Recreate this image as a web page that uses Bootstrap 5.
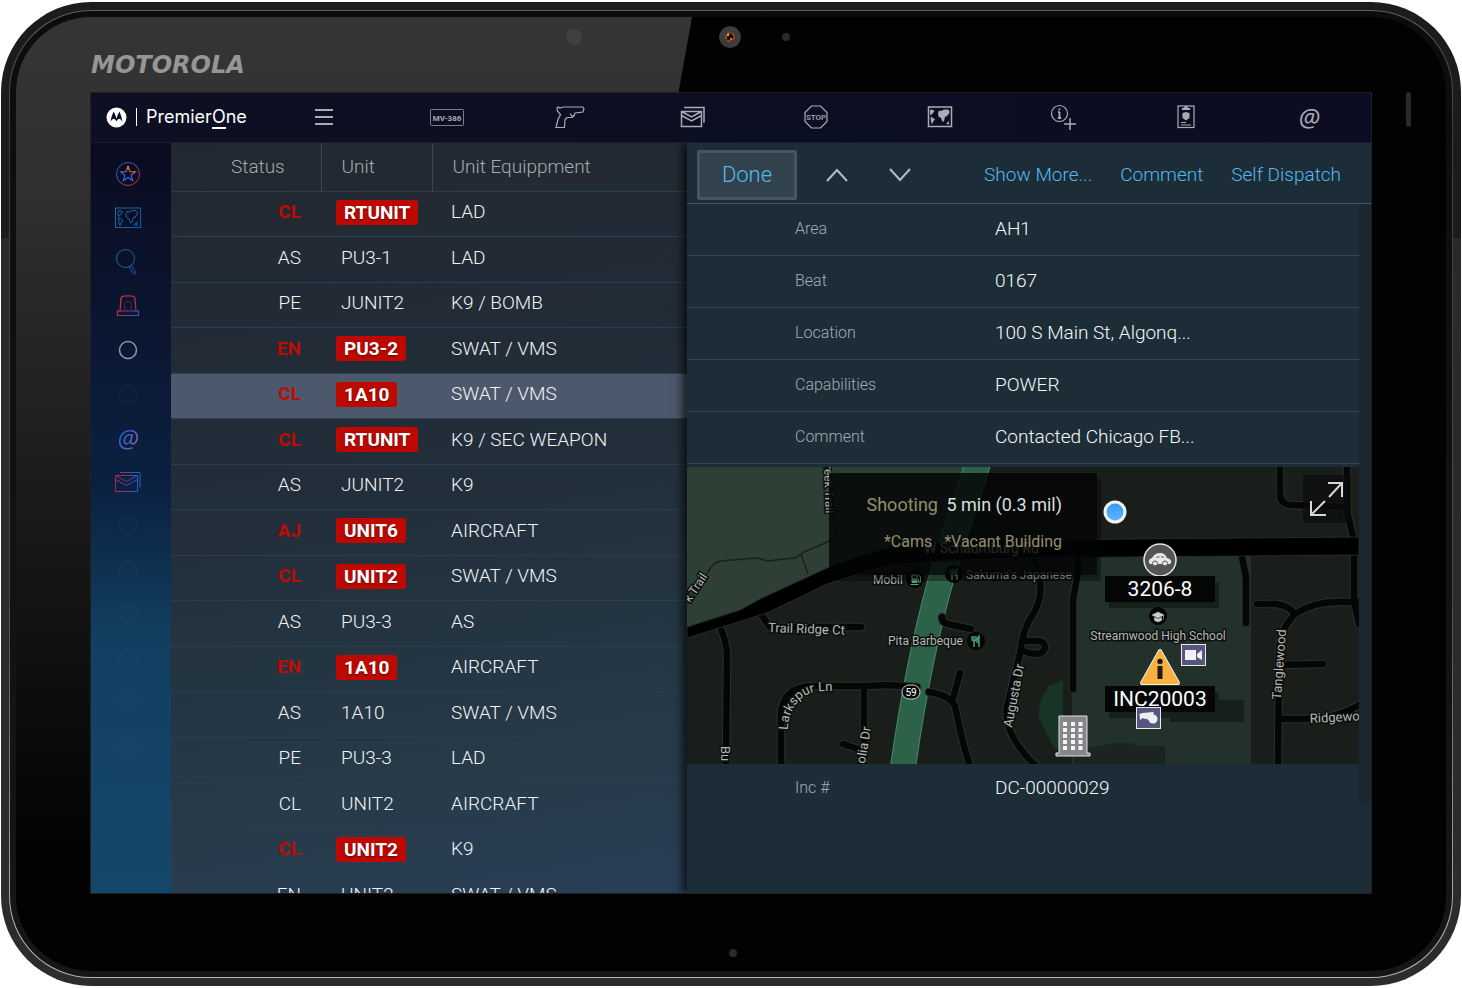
<!DOCTYPE html>
<html lang="en">
<head>
<meta charset="utf-8">
<meta name="viewport" content="width=device-width, initial-scale=1">
<title>PremierOne</title>
<link href="https://cdn.jsdelivr.net/npm/bootstrap@5.3.0/dist/css/bootstrap.min.css" rel="stylesheet">
<style>
  body { font-family: Roboto, "Liberation Sans", sans-serif; background: #fff; color: #eceff1; font-size: 19px; line-height: 24px; }
  button { font-family: inherit; }
  /* tablet body */
  .device { height: 100vh; padding: 2px 1px; }
  .shell { padding: 8px; border-radius: 90px; background: linear-gradient(#1b1c1d, #1c1c1e 24%, #2a2a2a 24%, #2c2c2c); }
  .rim { padding: 1px; border-radius: 82px; background: linear-gradient(#5c5e60, #3c3e40 12%, #48494a 60%, #b4b5b6 96%); }
  .gasket { padding: 6px; border-radius: 81px; background: linear-gradient(#0b0c0c, #161616); }
  .glass { position: relative; border-radius: 75px; background: #020202; overflow: hidden; padding: 0 75px 78px; }
  .glare { position: absolute; top: 0; left: 0; width: 676px; height: 830px; background: linear-gradient(#353535, #303030 20%, #030303); clip-path: polygon(0 0, 100% 0, 78% 100%, 0 100%); }
  .lens { position: absolute; border-radius: 50%; }
  .lens-left { width: 16px; height: 16px; left: calc(50% - 165px); top: 12px; background: #404040; }
  .lens-main { width: 22px; height: 22px; left: calc(50% - 12px); top: 9px; }
  .lens-dot { width: 8px; height: 8px; left: calc(50% + 51px); top: 16px; background: #2a2a2a; }
  .lens-low { width: 8px; height: 8px; left: calc(50% - 2px); bottom: 14px; background: #2b2b2b; }
  .speaker { position: absolute; right: 35px; top: 75px; width: 5px; height: 35px; border-radius: 3px; background: #2a2a2a; }
  .maker { position: relative; height: 77px; padding-top: 36px; font: italic bold 24px/24px "DejaVu Sans", sans-serif; color: #969696; }
  .screen { position: relative; min-height: 0; outline: 1px solid #1d1f22; }
  /* top bar */
  .topbar { height: 50px; background: linear-gradient(90deg, #0d0f22, #0c0d22); border-bottom: 1px solid #1b1c28; }
  .brand { width: 171px; padding-left: 15px; }
  .brand-name { font: 18px/18px Inter, sans-serif; color: #fff; border-left: 1px solid #fff; padding-left: 9px; margin-left: 9px; }
  .brand-name span { border-bottom: 2px solid #fff; }
  .icon-btn { background: none; border: 0; padding: 0; color: #a9acb4; display: flex; align-items: center; justify-content: center; }
  .icon-btn svg, .side svg { fill: none; stroke: currentColor; }
  .at { font: italic 25px/26px "Open Sans", sans-serif; }
  /* left rail */
  .side { width: 80px; padding: 9px 6px 0 0; background: linear-gradient(#0a0c20, #0b152f 22%, #0b2142 46%, #123f60 66%, #15476a); }
  .side .icon-btn { height: 44px; width: 100%; }
  .side .dim { color: #5f86a4; opacity: .12; }
  .side .at { background: linear-gradient(120deg, #1565c8 25%, #7a5bb5 75%); -webkit-background-clip: text; background-clip: text; color: transparent; }
  /* unit list */
  .units { flex: 516 1 0; min-width: 0; overflow: hidden; background: linear-gradient(170deg, #222831, #222e3a 45%, #263a48 80%, #293f56); }
  .unit-table { --bs-table-bg: transparent; --bs-table-color: #f2f4f6; table-layout: fixed; margin: 0; border-color: #2a3f4e; font-weight: 300; }
  .unit-table th { height: 49px; padding: 0 0 0 20px; font-weight: 300; color: #a6abb0; vertical-align: middle; }
  .unit-table th + th { border-left: 1px solid #3a4650; }
  .unit-table .col-status { width: 150px; padding-left: 60px; }
  .unit-table .col-unit { width: 111px; }
  .unit-table td { height: 46px; padding: 0 0 4px 19px; vertical-align: middle; }
  .unit-table tbody tr:nth-child(odd) td { height: 45px; }
  .unit-table td:first-child { text-align: right; padding-right: 20px; }
  .unit-table td:nth-child(2) { padding-left: 15px; }
  .unit-table td:nth-child(2) span { display: inline-block; padding: 0 5px; }
  .unit-table .alert-row td:first-child { color: #bd0c04; font-weight: 700; }
  .unit-table .alert-row td:nth-child(2) span { background: #bd0900; color: #fff; font-weight: 700; padding: 0 8px; line-height: 25px; border-radius: 3px; text-shadow: 0 1px 2px #600; }
  .unit-table .chosen td { background: #4c596c; }
  /* detail panel */
  .detail { flex: 684 1 0; min-width: 0; background: #1c2d38; box-shadow: -5px 0 8px rgba(0,0,0,.65); position: relative; }
  .tools { height: 61px; padding: 7px 30px 3px 10px; border-bottom: 1px solid #46545d; font-weight: 300; }
  .tools a { color: #54b9ee; text-decoration: none; }
  .done { width: 100px; height: 50px; border: 3px solid #465660; border-radius: 2px; background: #31424d; color: #54b9ee; font-size: 22px; font-weight: 300; }
  .tools .icon-btn { width: 63px; color: #b6bdc1; }
  .fields { margin: 0; }
  .field { height: 52px; padding-left: 108px; border-bottom: 1px solid #34464f; }
  .field dt { width: 200px; font-size: 16px; font-weight: 300; color: #a3acb1; }
  .field dd { margin: 0; color: #f6f8f9; font-weight: 300; }
  .last-field { border: 0; height: 48px; }
  .track { width: 12px; height: 600px; border-radius: 6px; background: #182730; flex: none; }
  .map { position: relative; height: 297px; margin-top: 3px; overflow: hidden; background: #1a1e1b; }
  .map > svg { width: 100%; height: 100%; display: block; }
  .map text { font-family: Roboto, sans-serif; }
  .callout { position: absolute; left: 142px; top: 6px; width: 268px; height: 102px; padding: 20px 35px 0 0; text-align: right; font-size: 18px; background: rgba(3,5,5,.82); box-shadow: 4px 6px 0 rgba(0,0,0,.35); color: #dcdedf; }
  .callout p { margin: 0 0 13px; }
  .callout .tan { color: #958d6c; margin-right: 4px; }
  .callout .notes { font-size: 16px; color: #958d6c; }
  .expand { position: absolute; right: 8px; top: 8px; width: 48px; height: 48px; background: rgba(10,12,12,.7); color: #d6d8d8; }
</style>
</head>
<body>
<!-- shared gradients and symbols -->
<svg width="0" height="0" class="position-absolute" aria-hidden="true">
  <defs>
    <linearGradient id="gStar" x1="0" y1="0" x2="26" y2="26" gradientUnits="userSpaceOnUse"><stop offset=".1" stop-color="#135cb0"/><stop offset=".5" stop-color="#6a55a8"/><stop offset=".8" stop-color="#d0264a"/></linearGradient>
    <linearGradient id="gStar2" x1="14" y1="5" x2="10" y2="20" gradientUnits="userSpaceOnUse"><stop offset="0" stop-color="#e8a31c"/><stop offset=".35" stop-color="#c6554a"/><stop offset=".6" stop-color="#1a6cf0"/><stop offset="1" stop-color="#5a50e0"/></linearGradient>
    <linearGradient id="gBlue" x1="0" y1="0" x2="26" y2="20" gradientUnits="userSpaceOnUse"><stop offset="0" stop-color="#1d6f96"/><stop offset="1" stop-color="#0c58b4"/></linearGradient>
    <linearGradient id="gAlarm" x1="4" y1="0" x2="20" y2="24" gradientUnits="userSpaceOnUse"><stop offset="0" stop-color="#e8442e"/><stop offset=".55" stop-color="#b02f5e"/><stop offset="1" stop-color="#1d62c4"/></linearGradient>
    <linearGradient id="gMail" x1="0" y1="0" x2="26" y2="0" gradientUnits="userSpaceOnUse"><stop offset="0" stop-color="#b2264e"/><stop offset=".6" stop-color="#5a4c94"/><stop offset="1" stop-color="#0f66d0"/></linearGradient>
    <path id="lands" d="M3 4l2-.5 2.500 1.500-1 1.500L5 8l-1 1.500L3 8zM3.500 11l2 .5 2.500 2-1.500 1.500L5 18.500l-1-3zM11 7l1-2.500 2 .5 3-1.500 4 0 1.500 1.500-.5 3-1.500 1-.5 2-1-1-1 1-1 4-1.500 1-1.500-4-2.500-1.500zM19 18l3-3 0 3.500z"/>
  </defs>
</svg>

<div class="device">
 <div class="shell h-100"><div class="rim h-100"><div class="gasket h-100">
 <div class="glass h-100 d-flex flex-column">
  <div class="glare"></div>
  <span class="lens lens-left"></span>
  <svg class="lens lens-main" viewBox="0 0 22 22"><circle cx="11" cy="11" r="11" fill="#3e3c3b"/><circle cx="11" cy="11" r="4" fill="#1b0b06" stroke="#c04a22" stroke-width="1.5" stroke-dasharray="4 1"/><circle cx="9" cy="9" r="1" fill="#ffd9a8"/><circle cx="12" cy="13" r="1" fill="#f0a050"/></svg>
  <span class="lens lens-dot"></span>
  <span class="speaker"></span>
  <span class="lens lens-low"></span>
  <div class="maker">MOTOROLA</div>

  <div class="screen flex-fill d-flex flex-column">
   <header class="topbar d-flex flex-shrink-0">
    <div class="brand d-flex align-items-center flex-shrink-0">
     <svg width="21" height="21" viewBox="0 0 21 21"><circle cx="10.500" cy="10.500" r="10" fill="#fff"/><path d="M4.500 15.500C5 11 6.300 7 7.700 4.500c1.200 2.200 2.200 4.700 2.800 7.300.6-2.600 1.600-5.100 2.800-7.300 1.400 2.500 2.700 6.500 3.200 11-.6-2-1.800-3.300-3.100-3.700-1.200.1-2 .9-2.900 2.600-.9-1.700-1.700-2.500-2.900-2.600-1.300.4-2.500 1.700-3.100 3.700z" fill="#0d0f22"/></svg>
     <div class="brand-name">Premier<span>O</span>ne</div>
    </div>
    <nav class="d-flex flex-fill" aria-label="Main">
     <button class="icon-btn col" aria-label="Menu"><svg width="18" height="16" stroke-width="2"><path d="M0 1h18M0 8h18M0 15h18"/></svg></button>
     <button class="icon-btn col" aria-label="Plate search"><svg width="34" height="17"><rect x=".5" y=".5" width="33" height="16" rx="1" opacity=".7"/><text x="17" y="12" text-anchor="middle" font-family="Roboto" font-weight="700" font-size="8" fill="currentColor" stroke="none">MV-386</text></svg></button>
     <button class="icon-btn col" aria-label="Gun search"><svg width="30" height="23" viewBox="0 0 30 23"><path d="M2 2l1-1 2 1 3-1h20l1 2-1 3-8 1-1 3-2 1.500h-5l-2 2-.5 8H1l2-8 2.500-5L2.500 5z M15 7.500l2 2.500 3-.5" stroke-width="1.200"/></svg></button>
     <button class="icon-btn col" aria-label="Messages"><svg width="26" height="22" viewBox="0 0 26 22" stroke-width="1.500"><path d="M4 1.500h20v15M1.500 5.500h20v15h-20zM1.500 5.500l10 5.500 10-5.500M1.500 9.500l10 5.500 10-5.500"/></svg></button>
     <button class="icon-btn col" aria-label="Stops"><svg width="24" height="24"><path d="M7.500 1h9L23 7.500v9L16.500 23h-9L1 16.500v-9z" stroke-width="1.200"/><text x="12" y="15" text-anchor="middle" font-family="Roboto" font-weight="500" font-size="8" fill="currentColor" stroke="none">STOP</text></svg></button>
     <button class="icon-btn col" aria-label="Map"><svg width="26" height="22" viewBox="0 0 26 22"><rect x="1.500" y="1" width="23" height="19.500" stroke-width="1.500"/><path d="M1 20.500h24"/><use href="#lands" fill="currentColor" stroke="none"/></svg></button>
     <button class="icon-btn col" aria-label="Add information"><svg width="26" height="26" viewBox="0 0 26 26" stroke-width="1.200"><circle cx="9.500" cy="9.500" r="8"/><path d="M9.500 4.500v1.800M9.500 8v6M8 8h1.500M7.800 14h3.400" stroke-width="1.800"/><path d="M20 14v12M14 20h12" stroke-width="1.500"/></svg></button>
     <button class="icon-btn col" aria-label="Badge"><svg width="18" height="24" viewBox="0 0 18 24"><rect x="1" y="1" width="16" height="21.500" stroke-width="1.200"/><path d="M5 5V3h2l1-2h2l1 2h2v2zM5.500 8l3.500-1 3.500 1v5L9 15.500 5.500 13z" fill="currentColor" stroke="none"/><path d="M4 17.500h5M4 20h10"/></svg></button>
     <button class="icon-btn col at" aria-label="Mentions">@</button>
    </nav>
   </header>

   <div class="d-flex flex-fill overflow-hidden">
    <nav class="side flex-shrink-0" aria-label="Shortcuts">
     <button class="icon-btn" aria-label="Favorites"><svg width="26" height="26" viewBox="0 0 26 26"><circle cx="13" cy="13" r="11.500" stroke="url(#gStar)"/><path d="M13 5.500l1.900 5.200 5.500.2-4.300 3.400 1.500 5.300L13 16.500l-4.600 3.100 1.500-5.300-4.300-3.400 5.500-.2z" stroke="url(#gStar2)" stroke-width="1.200"/></svg></button>
     <button class="icon-btn" aria-label="Map"><svg width="26" height="22" viewBox="0 0 26 22"><rect x=".5" y="1" width="25" height="19.500" stroke="url(#gBlue)"/><use href="#lands" stroke="url(#gBlue)"/></svg></button>
     <button class="icon-btn" aria-label="Search"><svg width="26" height="28" viewBox="0 0 26 28"><circle cx="10.500" cy="10.500" r="9" stroke="url(#gBlue)"/><path d="M14 19l2-1.500 5 7.500-2 1.500z" stroke="url(#gBlue)"/></svg></button>
     <button class="icon-btn" aria-label="Emergency"><svg width="24" height="22" viewBox="0 0 24 22"><path d="M4 16L5 4q.3-3 3.500-3h7Q18.700 1 19 4l1 12M1.500 16h21v4.500h-21zM4 16h16" stroke="url(#gAlarm)" stroke-width="1.200"/><path d="M9.500 15Q8 12 8.500 9.500 9.500 6.500 12 6.500t3.500 3q.5 2.500-1 5.500" stroke="#5e2040"/></svg></button>
     <button class="icon-btn" aria-label="Slot 5"><svg width="20" height="20"><circle cx="10" cy="10" r="8.500" stroke="#8f98a6" stroke-width="1.500"/></svg></button>
     <button class="icon-btn dim" aria-label="Slot 6"><svg width="20" height="20"><circle cx="10" cy="10" r="8.500"/></svg></button>
     <button class="icon-btn" aria-label="Mentions"><span class="at">@</span></button>
     <button class="icon-btn" aria-label="Messages"><svg width="26" height="22" viewBox="0 0 26 22"><path d="M5 1.500h20v15M.5 4.500h22v16h-22zM.5 4.500l11 6 11-6M.5 8.500l11 6 11-6" stroke="url(#gMail)"/></svg></button>
     <button class="icon-btn dim" aria-label="Slot 9"><svg width="20" height="20"><circle cx="10" cy="10" r="8.500"/></svg></button>
     <button class="icon-btn dim" aria-label="Slot 10"><svg width="20" height="20"><circle cx="10" cy="10" r="8.500"/></svg></button>
     <button class="icon-btn dim" aria-label="Slot 11"><svg width="20" height="20"><circle cx="10" cy="10" r="8.500"/></svg></button>
     <button class="icon-btn dim" aria-label="Slot 12"><svg width="20" height="20"><circle cx="10" cy="10" r="8.500"/></svg></button>
     <button class="icon-btn dim" aria-label="Slot 13"><svg width="20" height="20"><circle cx="10" cy="10" r="8.500"/></svg></button>
     <button class="icon-btn dim" aria-label="Slot 14"><svg width="20" height="20"><circle cx="10" cy="10" r="8.500"/></svg></button>
    </nav>

    <section class="units">
     <table class="table unit-table">
      <thead><tr><th class="col-status" scope="col">Status</th><th class="col-unit" scope="col">Unit</th><th scope="col">Unit Equippment</th></tr></thead>
      <tbody>
       <tr class="alert-row"><td>CL</td><td><span>RTUNIT</span></td><td>LAD</td></tr>
       <tr><td>AS</td><td><span>PU3-1</span></td><td>LAD</td></tr>
       <tr><td>PE</td><td><span>JUNIT2</span></td><td>K9 / BOMB</td></tr>
       <tr class="alert-row"><td>EN</td><td><span>PU3-2</span></td><td>SWAT / VMS</td></tr>
       <tr class="alert-row chosen"><td>CL</td><td><span>1A10</span></td><td>SWAT / VMS</td></tr>
       <tr class="alert-row"><td>CL</td><td><span>RTUNIT</span></td><td>K9 / SEC WEAPON</td></tr>
       <tr><td>AS</td><td><span>JUNIT2</span></td><td>K9</td></tr>
       <tr class="alert-row"><td>AJ</td><td><span>UNIT6</span></td><td>AIRCRAFT</td></tr>
       <tr class="alert-row"><td>CL</td><td><span>UNIT2</span></td><td>SWAT / VMS</td></tr>
       <tr><td>AS</td><td><span>PU3-3</span></td><td>AS</td></tr>
       <tr class="alert-row"><td>EN</td><td><span>1A10</span></td><td>AIRCRAFT</td></tr>
       <tr><td>AS</td><td><span>1A10</span></td><td>SWAT / VMS</td></tr>
       <tr><td>PE</td><td><span>PU3-3</span></td><td>LAD</td></tr>
       <tr><td>CL</td><td><span>UNIT2</span></td><td>AIRCRAFT</td></tr>
       <tr class="alert-row"><td>CL</td><td><span>UNIT2</span></td><td>K9</td></tr>
       <tr><td>EN</td><td><span>UNIT2</span></td><td>SWAT / VMS</td></tr>
      </tbody>
     </table>
    </section>

    <section class="detail">
     <div class="tools d-flex align-items-center">
      <button class="done">Done</button>
      <div class="d-flex ms-2 me-auto">
       <button class="icon-btn" aria-label="Previous"><svg width="22" height="14" stroke-width="2"><path d="M1 13L11 2l10 11"/></svg></button>
       <button class="icon-btn" aria-label="Next"><svg width="22" height="14" stroke-width="2"><path d="M1 1l10 11L21 1"/></svg></button>
      </div>
      <a href="#">Show More...</a>
      <a href="#" class="mx-4 px-1">Comment</a>
      <a href="#">Self Dispatch</a>
     </div>
     <div class="d-flex">
      <div class="flex-fill">
       <dl class="fields">
        <div class="field d-flex align-items-center"><dt>Area</dt><dd>AH1</dd></div>
        <div class="field d-flex align-items-center"><dt>Beat</dt><dd>0167</dd></div>
        <div class="field d-flex align-items-center"><dt>Location</dt><dd>100 S Main St, Algonq...</dd></div>
        <div class="field d-flex align-items-center"><dt>Capabilities</dt><dd>POWER</dd></div>
        <div class="field d-flex align-items-center"><dt>Comment</dt><dd>Contacted Chicago FB...</dd></div>
       </dl>
       <div class="map">
        <svg viewBox="0 0 672 297" preserveAspectRatio="xMinYMin slice">
         <defs>
          <path id="larkspur" d="M101 263C101 244 112 224 136 224H150"/>
          <linearGradient id="dot" x1="0" y1="0" x2="0" y2="1"><stop offset="0" stop-color="#3399f5"/><stop offset="1" stop-color="#62b6ff"/></linearGradient>
         </defs>
         <!-- land -->
         <path d="M0 0H290L262 84 140 110 60 146 0 166z" fill="#2e4035"/>
         <path d="M385 88H564V297H385z" fill="#22322a"/>
         <path d="M387 280h18l20-4h20l6 3h27v18h-91z" fill="#1b241f"/>
         <path d="M362 219l14-6v67l-8 2-17-32 3-18z" fill="#173424"/>
         <path d="M291-4C275 48 264 76 253 116C238 170 226 230 216 300" fill="none" stroke="#478a66" stroke-width="26"/>
         <path d="M291-4C275 48 264 76 253 116C238 170 226 230 216 300" fill="none" stroke="#2c6248" stroke-width="24"/>
         <!-- trails -->
         <path d="M0 136L25 99q3-4 9-5l36-3 10 3 28-3 9-6 28-12q4-3 4-9-2-12-6-22M114 87l7 20" fill="none" stroke="#1a201c" stroke-width="1.500"/>
         <!-- streets: a grey casing under a black line -->
         <g fill="none" stroke-linecap="round" stroke-linejoin="round">
          <g stroke="#2b302d" stroke-width="8.500">
           <path id="westStreets" d="M33 160q7 16 7 28L39 300M73 146l10 14H174M94 300V250Q94 219 128 219H180l20-1 30 2M242 225q20 3 26 14 8 40 15 60M265 235l8-29M177 220V300M156 277l18 6M255 150q-1 6 10 8l19 4" stroke="inherit"/>
           <path id="eastStreets" d="M347 88l6 26q3 20-10 38-8 15-9 30L320 240Q316 268 350 300M338 174h14q6 1 6 7-3 10-22 3M391 88v18l-5 26v90M555 90l4 20v46M570 137h20q12 2 18 10 20-13 45-12h19M608 147q-17 18-16 40L591 300M592 198l44-1M592 252h26q30 0 54-14M667 88v46l5 23M593-4v30q0 12 12 12l55 2M660-4v48l6 26"/>
          </g>
          <g stroke="#050606" stroke-width="6.500">
           <path d="M33 160q7 16 7 28L39 300M73 146l10 14H174M94 300V250Q94 219 128 219H180l20-1 30 2M242 225q20 3 26 14 8 40 15 60M265 235l8-29M177 220V300M156 277l18 6M255 150q-1 6 10 8l19 4"/>
           <path d="M347 88l6 26q3 20-10 38-8 15-9 30L320 240Q316 268 350 300M338 174h14q6 1 6 7-3 10-22 3M391 88v18l-5 26v90M555 90l4 20v46M570 137h20q12 2 18 10 20-13 45-12h19M608 147q-17 18-16 40L591 300M592 198l44-1M592 252h26q30 0 54-14M667 88v46l5 23M593-4v30q0 12 12 12l55 2M660-4v48l6 26"/>
          </g>
         </g>
         <path d="M0 160L53 143 73 132 140 101Q190 80 230 77L333 73 672 70V88L333 91Q220 94 190 101L140 117 80 146 45 157 0 171z" fill="#000" stroke="#262b28"/>
         <!-- street and place names -->
         <g font-size="13" fill="#b4b8b5" stroke="#0c0f0d" stroke-width="3" paint-order="stroke">
          <text transform="translate(137 -2) rotate(88)" font-size="12">reek Trail</text>
          <text transform="translate(3 136) rotate(-56)" font-size="12">k Trail</text>
          <text transform="translate(81 165) rotate(2)">Trail Ridge Ct</text>
          <text><textPath href="#larkspur">Larkspur Ln</textPath></text>
          <text transform="translate(34 279) rotate(90)">Bu</text>
          <text transform="translate(177 304) rotate(-81)">nolia Dr</text>
          <text transform="translate(325 261) rotate(-79)">Augusta Dr</text>
          <text transform="translate(594 233) rotate(-86)">Tanglewood</text>
          <text transform="translate(623 256) rotate(-3)">Ridgewo</text>
          <text x="186" y="117" font-size="12">Mobil</text>
          <text x="201" y="178" font-size="12">Pita Barbeque</text>
          <text x="471" y="173" font-size="12" text-anchor="middle">Streamwood High School</text>
          <text x="279" y="112" font-size="12">Sakuma's Japanese</text>
          <text x="237" y="86" font-size="14">W Schaumburg Rd</text>
         </g>
         <rect x="215" y="218" width="18" height="14" rx="7" fill="#090b0a" stroke="#c9cccb"/>
         <text x="224" y="229" font-size="10" text-anchor="middle" fill="#fff">59</text>
         <g fill="#020303"><circle cx="228" cy="112" r="9"/><circle cx="267" cy="107" r="9"/><circle cx="289" cy="174" r="9"/><circle cx="471" cy="149" r="9"/></g>
         <path d="M225 107.500h5v8h-5z" fill="#5da080" stroke="#5da080"/>
         <path d="M225.500 108.500h4v3h-4z" fill="#020303"/>
         <path d="M223.500 117.500h8M231 107l2.500 3v5h-2v-3" fill="none" stroke="#5da080"/>
         <path id="fork" d="M285 169v3q0 2 2 2v6M289 169v3q0 2-2 2M287 169v4M292 180v-11q-2 2-2 6h2" fill="none" stroke="#4da57c" stroke-width="1.400"/>
         <use href="#fork" x="-22" y="-67"/>
         <path d="M465 148l6-3 6 3-6 3zM467.500 150.500v3l3.500 1.500 3.500-1.500v-3l-3.500 1.500zM476.500 148v5" fill="#c9cdcb" stroke="#c9cdcb" stroke-width=".5"/>
         <!-- own position -->
         <circle cx="428" cy="45" r="10" fill="url(#dot)" stroke="#f2f4f5" stroke-width="3"/>
         <!-- patrol unit -->
         <circle cx="473" cy="93" r="16" fill="#515355" stroke="#e3e4e5" stroke-width="1.500"/>
         <path d="M462 96q-1-4 3-5 3-5 8-5t7 5q5 1 4 5l-1 1h-20z" fill="#e6e7e8"/>
         <path d="M468 91q2-2.500 4.500-2.500V91zM474 88.500q2.500 0 4 2.500h-4z" fill="#515355" opacity=".5"/>
         <g fill="#e6e7e8" stroke="#515355"><circle cx="468" cy="96.500" r="2.500"/><circle cx="478" cy="96.500" r="2.500"/></g>
         <g fill="#000"><path d="M422 115h110v26H422zM422 225h110v26H422zM483 233h74v22h-74z" opacity=".35"/><path d="M418 109h110v26H418zM418 219h110v26H418z" fill="#050707"/></g>
         <text x="473" y="129" font-size="21" text-anchor="middle" fill="#fff">3206-8</text>
         <text x="473" y="239" font-size="21" text-anchor="middle" fill="#fff">INC20003</text>
         <!-- incident and its attachments -->
         <path d="M473 184L455 216H491z" fill="#fbb040" stroke="#f5efe6" stroke-width="4" stroke-linejoin="round"/>
         <path d="M473 184L455 216H491z" fill="#fbb040" stroke="#fbb040" stroke-width="2" stroke-linejoin="round"/>
         <circle cx="473" cy="194.500" r="2.700" fill="#1b1b1b"/><path d="M470.500 199h5v13h-5z" fill="#1b1b1b"/>
         <g fill="#57567c" stroke="#e9e9ef"><rect x="494.500" y="177.500" width="24" height="21"/><rect x="449.500" y="240.500" width="24" height="21"/></g>
         <path d="M498 183h11v10h-11zM510 187l5-4v10l-5-3z" fill="#f0f0f4"/>
         <path d="M452.500 247l3-1 11-1v4l-9 3-1.500-1-3 2z" fill="#f0f0f4"/><circle cx="466" cy="252" r="4.500" fill="#f0f0f4"/><path d="M459 250.500l5 3" stroke="#f0f0f4" stroke-width="2"/>
         <!-- building -->
         <path d="M372 249h28v37h3v3h-34v-3h3z" fill="#85878a" stroke="#e1e2e3"/>
         <path d="M378 255v29M386 255v29M393.500 255v29" stroke="#f4f4f4" stroke-width="4" stroke-dasharray="4 2" fill="none"/>
        </svg>
        <div class="callout">
         <p><span class="tan">Shooting</span> 5 min (0.3 mil)</p>
         <p class="notes"><span class="me-2">*Cams</span> *Vacant Building</p>
        </div>
        <button class="icon-btn expand" aria-label="Expand map"><svg width="36" height="36" stroke-width="2"><path d="M20 16L33 2M19 2h14v14M16 20L2 34M2 20v14h15"/></svg></button>
       </div>
       <dl class="fields"><div class="field last-field d-flex align-items-center"><dt>Inc #</dt><dd>DC-00000029</dd></div></dl>
      </div>
      <div class="track"></div>
     </div>
    </section>
   </div>
  </div>
 </div>
 </div></div></div>
</div>
<script src="https://cdn.jsdelivr.net/npm/bootstrap@5.3.0/dist/js/bootstrap.bundle.min.js"></script>
</body>
</html>
